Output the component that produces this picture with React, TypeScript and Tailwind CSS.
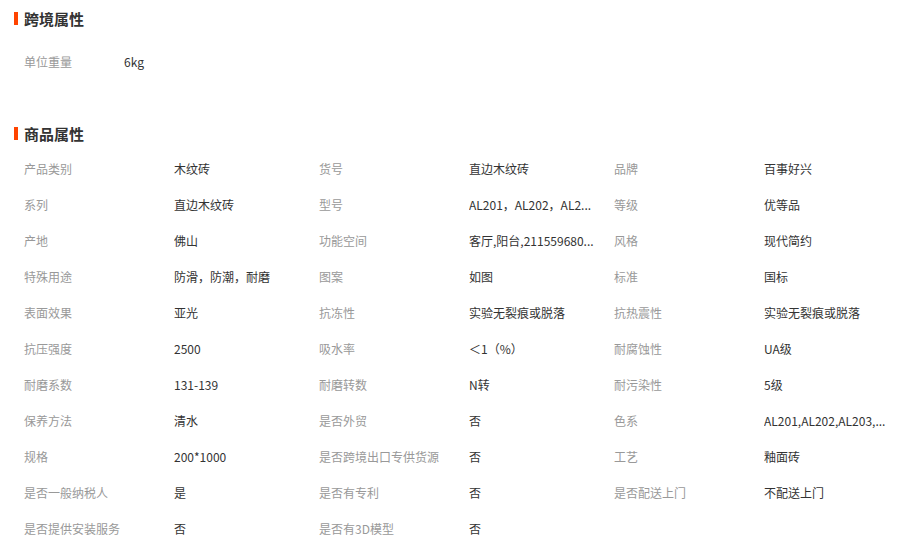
const crossBorder = [['单位重量', '6kg']];

const attrs: [string, string][] = [
  ['产品类别', '木纹砖'],
  ['货号', '直边木纹砖'],
  ['品牌', '百事好兴'],
  ['系列', '直边木纹砖'],
  ['型号', 'AL201，AL202，AL2...'],
  ['等级', '优等品'],
  ['产地', '佛山'],
  ['功能空间', '客厅,阳台,211559680...'],
  ['风格', '现代简约'],
  ['特殊用途', '防滑，防潮，耐磨'],
  ['图案', '如图'],
  ['标准', '国标'],
  ['表面效果', '亚光'],
  ['抗冻性', '实验无裂痕或脱落'],
  ['抗热震性', '实验无裂痕或脱落'],
  ['抗压强度', '2500'],
  ['吸水率', '＜1（%）'],
  ['耐腐蚀性', 'UA级'],
  ['耐磨系数', '131-139'],
  ['耐磨转数', 'N转'],
  ['耐污染性', '5级'],
  ['保养方法', '清水'],
  ['是否外贸', '否'],
  ['色系', 'AL201,AL202,AL203,...'],
  ['规格', '200*1000'],
  ['是否跨境出口专供货源', '否'],
  ['工艺', '釉面砖'],
  ['是否一般纳税人', '是'],
  ['是否有专利', '否'],
  ['是否配送上门', '不配送上门'],
  ['是否提供安装服务', '否'],
  ['是否有3D模型', '否'],
];

function Title({ text }: { text: string }) {
  return (
    <div className="flex items-center h-[36px] pl-[14px]">
      <span className="w-[4px] h-[13px] bg-[#ff4400] mr-[6px]" />
      <h3 className="text-[15px] font-bold text-[#333] leading-none">{text}</h3>
    </div>
  );
}

export default function App() {
  const rows: [string, string][][] = [];
  for (let i = 0; i < attrs.length; i += 3) rows.push(attrs.slice(i, i + 3));

  return (
    <div
      className="w-[920px] h-[542px] overflow-hidden bg-white text-[12px]"
      style={{ fontFamily: '"Noto Sans CJK SC", "Liberation Sans", sans-serif' }}
    >
      {/* 跨境属性 */}
      <div>
        <Title text="跨境属性" />
        <div className="pl-[24px] mt-[8px]">
          {crossBorder.map(([k, v]) => (
            <div key={k} className="flex items-center h-[36px]">
              <span className="w-[100px] text-[#999]">{k}</span>
              <span className="text-[#333]">{v}</span>
            </div>
          ))}
        </div>
      </div>

      {/* 商品属性 */}
      <div className="mt-[36px]">
        <div className="h-[35px] flex items-center">
          <Title text="商品属性" />
        </div>
        <div className="pl-[24px]">
          {rows.map((row, i) => (
            <div key={i} className="flex items-center h-[36px]">
              {row.map(([k, v]) => (
                <div key={k} className="flex items-center w-[295px]">
                  <span className="w-[150px] text-[#999] whitespace-nowrap">{k}</span>
                  <span className="w-[145px] pr-[20px] text-[#333] whitespace-nowrap truncate">{v}</span>
                </div>
              ))}
            </div>
          ))}
        </div>
      </div>
    </div>
  );
}
